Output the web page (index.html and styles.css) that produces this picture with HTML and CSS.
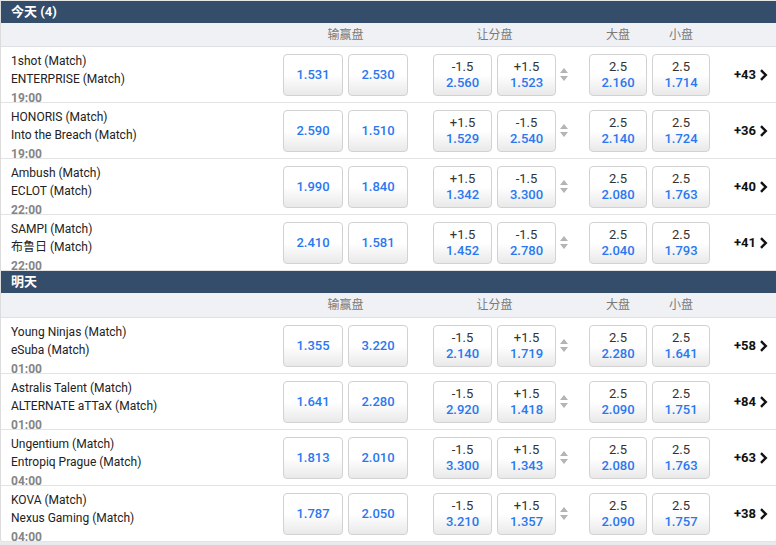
FILE: index.html
```html
<!DOCTYPE html>
<html lang="zh">
<head>
<meta charset="utf-8">
<link rel="stylesheet" href="styles.css">
</head>
<body>
<div class="board">
  <section class="group">
    <div class="group-title">今天 (4)</div>
    <div class="colhead">
      <div class="team"></div>
      <div class="ml">输赢盘</div>
      <div class="hc">让分盘</div>
      <div class="arrows-sp"></div>
      <div class="ou">大盘</div>
      <div class="ou">小盘</div>
      <div class="more"></div>
    </div>

    <div class="row">
      <div class="team"><div>1shot (Match)</div><div>ENTERPRISE (Match)</div><div class="time">19:00</div></div>
      <div class="ml"><button class="btn"><span class="odds">1.531</span></button><button class="btn"><span class="odds">2.530</span></button></div>
      <div class="hc"><button class="btn"><span class="line">-1.5</span><span class="odds">2.560</span></button><button class="btn"><span class="line">+1.5</span><span class="odds">1.523</span></button></div>
      <div class="arrows-sp"><span class="arrows"><i class="up"></i><i class="dn"></i></span></div>
      <div class="ou"><button class="btn"><span class="line">2.5</span><span class="odds">2.160</span></button></div>
      <div class="ou"><button class="btn"><span class="line">2.5</span><span class="odds">1.714</span></button></div>
      <div class="more">+43<svg width="9" height="12" viewBox="0 0 9 12"><path d="M2 1.2 L6.8 6 L2 10.8" fill="none" stroke="#111" stroke-width="2.4"/></svg></div>
    </div>

    <div class="row">
      <div class="team"><div>HONORIS (Match)</div><div>Into the Breach (Match)</div><div class="time">19:00</div></div>
      <div class="ml"><button class="btn"><span class="odds">2.590</span></button><button class="btn"><span class="odds">1.510</span></button></div>
      <div class="hc"><button class="btn"><span class="line">+1.5</span><span class="odds">1.529</span></button><button class="btn"><span class="line">-1.5</span><span class="odds">2.540</span></button></div>
      <div class="arrows-sp"><span class="arrows"><i class="up"></i><i class="dn"></i></span></div>
      <div class="ou"><button class="btn"><span class="line">2.5</span><span class="odds">2.140</span></button></div>
      <div class="ou"><button class="btn"><span class="line">2.5</span><span class="odds">1.724</span></button></div>
      <div class="more">+36<svg width="9" height="12" viewBox="0 0 9 12"><path d="M2 1.2 L6.8 6 L2 10.8" fill="none" stroke="#111" stroke-width="2.4"/></svg></div>
    </div>

    <div class="row">
      <div class="team"><div>Ambush (Match)</div><div>ECLOT (Match)</div><div class="time">22:00</div></div>
      <div class="ml"><button class="btn"><span class="odds">1.990</span></button><button class="btn"><span class="odds">1.840</span></button></div>
      <div class="hc"><button class="btn"><span class="line">+1.5</span><span class="odds">1.342</span></button><button class="btn"><span class="line">-1.5</span><span class="odds">3.300</span></button></div>
      <div class="arrows-sp"><span class="arrows"><i class="up"></i><i class="dn"></i></span></div>
      <div class="ou"><button class="btn"><span class="line">2.5</span><span class="odds">2.080</span></button></div>
      <div class="ou"><button class="btn"><span class="line">2.5</span><span class="odds">1.763</span></button></div>
      <div class="more">+40<svg width="9" height="12" viewBox="0 0 9 12"><path d="M2 1.2 L6.8 6 L2 10.8" fill="none" stroke="#111" stroke-width="2.4"/></svg></div>
    </div>

    <div class="row">
      <div class="team"><div>SAMPI (Match)</div><div>布鲁日 (Match)</div><div class="time">22:00</div></div>
      <div class="ml"><button class="btn"><span class="odds">2.410</span></button><button class="btn"><span class="odds">1.581</span></button></div>
      <div class="hc"><button class="btn"><span class="line">+1.5</span><span class="odds">1.452</span></button><button class="btn"><span class="line">-1.5</span><span class="odds">2.780</span></button></div>
      <div class="arrows-sp"><span class="arrows"><i class="up"></i><i class="dn"></i></span></div>
      <div class="ou"><button class="btn"><span class="line">2.5</span><span class="odds">2.040</span></button></div>
      <div class="ou"><button class="btn"><span class="line">2.5</span><span class="odds">1.793</span></button></div>
      <div class="more">+41<svg width="9" height="12" viewBox="0 0 9 12"><path d="M2 1.2 L6.8 6 L2 10.8" fill="none" stroke="#111" stroke-width="2.4"/></svg></div>
    </div>
  </section>

  <section class="group">
    <div class="group-title">明天</div>
    <div class="colhead">
      <div class="team"></div>
      <div class="ml">输赢盘</div>
      <div class="hc">让分盘</div>
      <div class="arrows-sp"></div>
      <div class="ou">大盘</div>
      <div class="ou">小盘</div>
      <div class="more"></div>
    </div>

    <div class="row">
      <div class="team"><div>Young Ninjas (Match)</div><div>eSuba (Match)</div><div class="time">01:00</div></div>
      <div class="ml"><button class="btn"><span class="odds">1.355</span></button><button class="btn"><span class="odds">3.220</span></button></div>
      <div class="hc"><button class="btn"><span class="line">-1.5</span><span class="odds">2.140</span></button><button class="btn"><span class="line">+1.5</span><span class="odds">1.719</span></button></div>
      <div class="arrows-sp"><span class="arrows"><i class="up"></i><i class="dn"></i></span></div>
      <div class="ou"><button class="btn"><span class="line">2.5</span><span class="odds">2.280</span></button></div>
      <div class="ou"><button class="btn"><span class="line">2.5</span><span class="odds">1.641</span></button></div>
      <div class="more">+58<svg width="9" height="12" viewBox="0 0 9 12"><path d="M2 1.2 L6.8 6 L2 10.8" fill="none" stroke="#111" stroke-width="2.4"/></svg></div>
    </div>

    <div class="row">
      <div class="team"><div>Astralis Talent (Match)</div><div>ALTERNATE aTTaX (Match)</div><div class="time">01:00</div></div>
      <div class="ml"><button class="btn"><span class="odds">1.641</span></button><button class="btn"><span class="odds">2.280</span></button></div>
      <div class="hc"><button class="btn"><span class="line">-1.5</span><span class="odds">2.920</span></button><button class="btn"><span class="line">+1.5</span><span class="odds">1.418</span></button></div>
      <div class="arrows-sp"><span class="arrows"><i class="up"></i><i class="dn"></i></span></div>
      <div class="ou"><button class="btn"><span class="line">2.5</span><span class="odds">2.090</span></button></div>
      <div class="ou"><button class="btn"><span class="line">2.5</span><span class="odds">1.751</span></button></div>
      <div class="more">+84<svg width="9" height="12" viewBox="0 0 9 12"><path d="M2 1.2 L6.8 6 L2 10.8" fill="none" stroke="#111" stroke-width="2.4"/></svg></div>
    </div>

    <div class="row">
      <div class="team"><div>Ungentium (Match)</div><div>Entropiq Prague (Match)</div><div class="time">04:00</div></div>
      <div class="ml"><button class="btn"><span class="odds">1.813</span></button><button class="btn"><span class="odds">2.010</span></button></div>
      <div class="hc"><button class="btn"><span class="line">-1.5</span><span class="odds">3.300</span></button><button class="btn"><span class="line">+1.5</span><span class="odds">1.343</span></button></div>
      <div class="arrows-sp"><span class="arrows"><i class="up"></i><i class="dn"></i></span></div>
      <div class="ou"><button class="btn"><span class="line">2.5</span><span class="odds">2.080</span></button></div>
      <div class="ou"><button class="btn"><span class="line">2.5</span><span class="odds">1.763</span></button></div>
      <div class="more">+63<svg width="9" height="12" viewBox="0 0 9 12"><path d="M2 1.2 L6.8 6 L2 10.8" fill="none" stroke="#111" stroke-width="2.4"/></svg></div>
    </div>

    <div class="row">
      <div class="team"><div>KOVA (Match)</div><div>Nexus Gaming (Match)</div><div class="time">04:00</div></div>
      <div class="ml"><button class="btn"><span class="odds">1.787</span></button><button class="btn"><span class="odds">2.050</span></button></div>
      <div class="hc"><button class="btn"><span class="line">-1.5</span><span class="odds">3.210</span></button><button class="btn"><span class="line">+1.5</span><span class="odds">1.357</span></button></div>
      <div class="arrows-sp"><span class="arrows"><i class="up"></i><i class="dn"></i></span></div>
      <div class="ou"><button class="btn"><span class="line">2.5</span><span class="odds">2.090</span></button></div>
      <div class="ou"><button class="btn"><span class="line">2.5</span><span class="odds">1.757</span></button></div>
      <div class="more">+38<svg width="9" height="12" viewBox="0 0 9 12"><path d="M2 1.2 L6.8 6 L2 10.8" fill="none" stroke="#111" stroke-width="2.4"/></svg></div>
    </div>
  </section>
</div>
</body>
</html>
```

FILE: styles.css
```css
* { box-sizing: border-box; }
html, body { margin: 0; padding: 0; }
body {
  background: #e9eaee;
  font-family: Roboto, "Noto Sans CJK SC", sans-serif;
  font-size: 12px;
  color: #222;
}
.board {
  width: 776px;
  background: #fff;
  border-top: 1px solid #e6e6e6;
  border-left: 1px solid #dcdcdc;
  border-radius: 0 0 4px 4px;
}
.group-title {
  height: 22px;
  background: #344d6a;
  color: #fff;
  font-weight: 700;
  font-size: 13px;
  line-height: 22px;
  padding-left: 10px;
}
.colhead {
  display: flex;
  height: 24px;
  background: #f0f1f5;
  border-bottom: 1px solid #dfe0e4;
  color: #7a7a7a;
  font-size: 12px;
  line-height: 24px;
}
.group + .group .colhead {
  height: 25px;
  line-height: 25px;
}
.colhead .ml, .colhead .hc, .colhead .ou { justify-content: center; }
.row {
  display: flex;
  align-items: center;
  height: 56px;
  border-bottom: 1px solid #e3e3e3;
}
.team {
  width: 282px;
  flex: none;
  padding-left: 10px;
}
.row .team {
  align-self: stretch;
  padding-top: 5px;
  line-height: 18px;
}
.time {
  color: #858585;
  font-weight: 700;
  line-height: 20px;
}
.ml {
  display: flex;
  gap: 5px;
  width: 125px;
  flex: none;
}
.hc {
  display: flex;
  gap: 5px;
  width: 123px;
  flex: none;
  margin-left: 25px;
}
.arrows-sp {
  width: 33px;
  flex: none;
  display: flex;
  align-items: center;
  padding-left: 4px;
}
.ou {
  display: flex;
  width: 58px;
  flex: none;
  margin-right: 5px;
}
.ou + .ou { margin-right: 0; }
.more {
  flex: 1;
  display: flex;
  align-items: center;
  justify-content: flex-end;
  gap: 3px;
  padding-right: 8px;
  font-weight: 700;
  font-size: 13px;
  color: #111;
}
.btn {
  width: 60px;
  height: 42px;
  flex: none;
  display: flex;
  flex-direction: column;
  align-items: center;
  justify-content: center;
  padding: 0;
  border: 1px solid #d2d2d2;
  border-radius: 4px;
  background: linear-gradient(#ffffff 0%, #ffffff 50%, #e9e9e9 100%);
  font-family: Roboto, sans-serif;
  font-size: 13px;
  line-height: 16px;
}
.hc .btn { width: 59px; }
.ou .btn { width: 58px; }
.line { color: #333; }
.odds { color: #2a78f0; font-weight: 500; }
.arrows {
  display: flex;
  flex-direction: column;
  gap: 3px;
}
.arrows i {
  display: block;
  width: 0;
  height: 0;
  border-left: 4px solid transparent;
  border-right: 4px solid transparent;
}
.arrows .up { border-bottom: 5px solid #b4b4b4; }
.arrows .dn { border-top: 5px solid #b4b4b4; }
```
